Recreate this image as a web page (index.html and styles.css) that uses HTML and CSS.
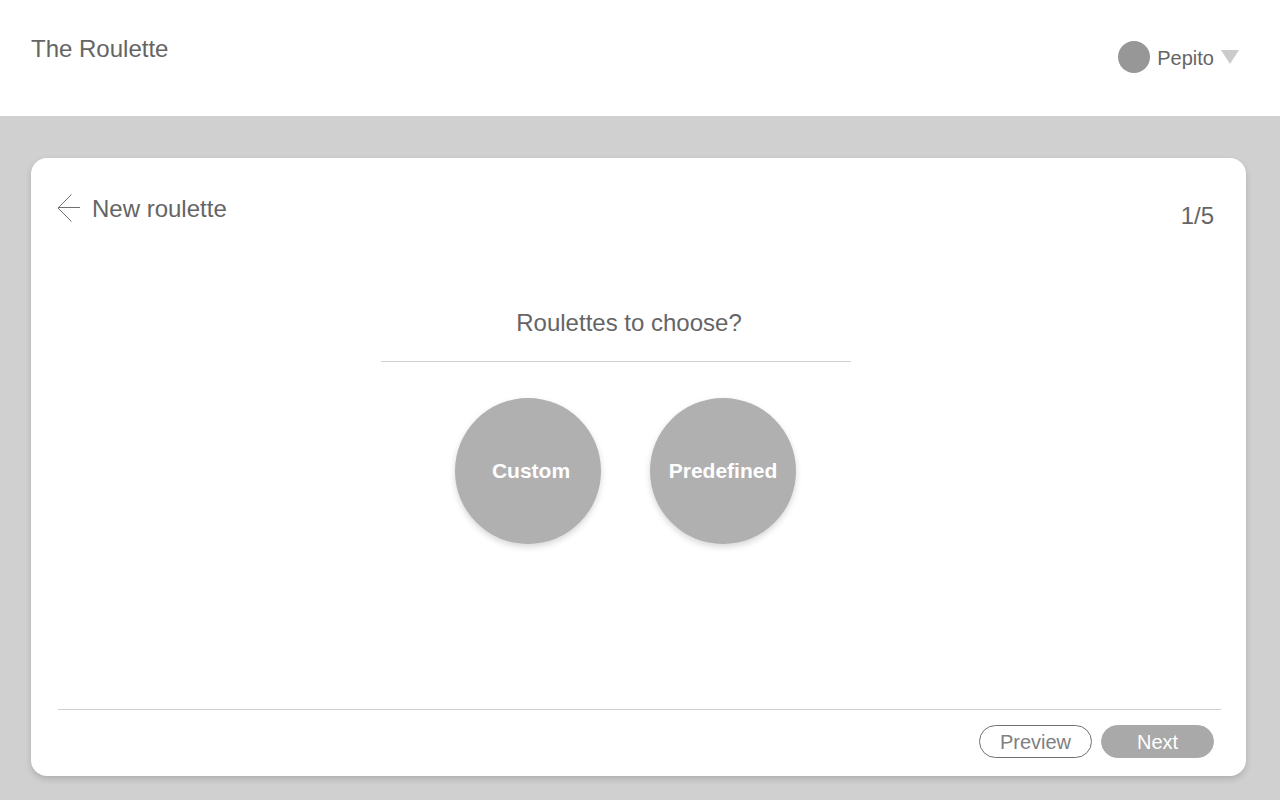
FILE: index.html
```html
<!DOCTYPE html>
<html lang="en">
<head>
<meta charset="utf-8">
<meta name="viewport" content="width=device-width, initial-scale=1">
<title>The Roulette</title>
<link rel="stylesheet" href="styles.css">
</head>
<body>
<header class="topbar">
  <h1 class="brand">The Roulette</h1>
  <button class="account" type="button">
    <span class="avatar"></span>
    <span class="account-name">Pepito</span>
    <svg class="caret" width="18" height="14" viewBox="0 0 18 14" aria-hidden="true"><path d="M0 0H18L9 14Z" fill="#cbcbcb"/></svg>
  </button>
</header>
<main class="page">
  <section class="card">
    <div class="card-head">
      <a class="back" href="#" aria-label="Back">
        <svg width="24" height="28" viewBox="0 0 24 28" fill="none" stroke="#707070" aria-hidden="true"><path d="M14.500 .5L1 14L14.500 27.500M1 13.500H23"/></svg>
      </a>
      <h2 class="title">New roulette</h2>
      <p class="step">1/5</p>
    </div>
    <div class="question">
      <h3 class="prompt">Roulettes to choose?</h3>
      <div class="choices">
        <button class="choice choice-custom" type="button">Custom</button>
        <button class="choice" type="button">Predefined</button>
      </div>
    </div>
    <footer class="actions">
      <button class="pill" type="button">Preview</button>
      <button class="pill pill-primary" type="button">Next</button>
    </footer>
  </section>
</main>
</body>
</html>
```
FILE: styles.css
```css
* {
  box-sizing: border-box;
}

body {
  display: flex;
  flex-direction: column;
  min-height: 100vh;
  margin: 0;
  background: #d0d0d0;
  color: #656565;
  font-family: "Liberation Sans Narrow", "Arial Narrow", "Liberation Sans", sans-serif;
  font-size: 24px;
  line-height: 32px;
}

h1, h2, h3, p {
  margin: 0;
  font-size: 24px;
  font-weight: 400;
}

button {
  padding: 0;
  border: 0;
  background: none;
  color: inherit;
  font: inherit;
  font-size: 20px;
  cursor: pointer;
}

.topbar {
  display: flex;
  justify-content: space-between;
  align-items: flex-start;
  padding: 33px 41px 42px 31px;
  background: #fff;
}

.account {
  display: flex;
  align-items: center;
  margin-top: 7px;
}

.avatar {
  width: 32px;
  height: 32px;
  margin-right: 7px;
  border-radius: 50%;
  background: #979797;
}

.account-name {
  padding-top: 2px;
  margin-right: 7px;
}

.page {
  display: flex;
  flex: 1;
  padding: 42px 34px 24px 31px;
}

.card {
  display: flex;
  flex: 1;
  flex-direction: column;
  border-radius: 16px;
  background: #fff;
  box-shadow: 0 3px 6px rgba(0, 0, 0, 0.16);
}

.card-head {
  display: flex;
  align-items: flex-start;
  padding: 35px 32px 0 26px;
}

.back {
  display: flex;
  margin: 1px 11px 0 0;
}

.step {
  margin: 7px 0 0 auto;
}

.question {
  align-self: center;
  width: 470px;
  max-width: 100%;
  margin: 75px 46px 0 0;
}

.prompt {
  padding: 0 0 22px 27px;
  border-bottom: 1px solid #d0d0d0;
  text-align: center;
}

.choices {
  display: flex;
  justify-content: center;
  gap: 49px;
  padding: 36px 0 36px 20px;
}

.choice {
  width: 146px;
  height: 146px;
  border-radius: 50%;
  background: #b0b0b0;
  box-shadow: 0 3px 6px rgba(0, 0, 0, 0.16);
  color: #fff;
  font-size: 21px;
  font-weight: 700;
}

.choice-custom {
  padding-left: 6px;
}

.actions {
  display: flex;
  justify-content: flex-end;
  gap: 9px;
  margin: auto 25px 0 27px;
  padding: 15px 7px 18px 0;
  border-top: 1px solid #d0d0d0;
}

.pill {
  width: 113px;
  height: 33px;
  border: 1px solid #707070;
  border-radius: 17px;
  background: #fff;
  color: #808080;
}

.pill-primary {
  border-color: #a9a9a9;
  background: #a9a9a9;
  color: #fff;
}
```
